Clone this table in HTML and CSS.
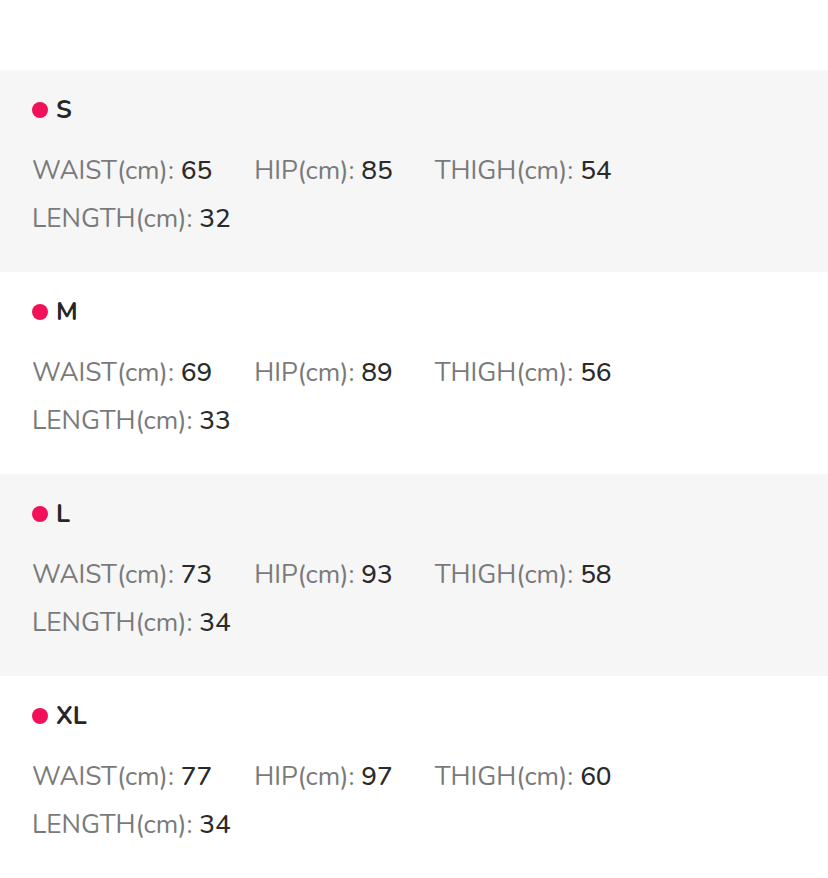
FILE: index.html
```html
<!DOCTYPE html>
<html lang="en">
<head>
<meta charset="utf-8">
<title>Size chart</title>
<link rel="stylesheet" href="styles.css">
</head>
<body>
<div class="page">
  <section class="size grey">
    <div class="size-title"><span class="dot"></span>S</div>
    <div class="specs">
      <div class="spec"><span class="label">WAIST(cm):</span> <span class="value">65</span></div>
      <div class="spec"><span class="label">HIP(cm):</span> <span class="value">85</span></div>
      <div class="spec"><span class="label">THIGH(cm):</span> <span class="value">54</span></div>
      <div class="spec"><span class="label">LENGTH(cm):</span> <span class="value">32</span></div>
    </div>
  </section>
  <section class="size">
    <div class="size-title"><span class="dot"></span>M</div>
    <div class="specs">
      <div class="spec"><span class="label">WAIST(cm):</span> <span class="value">69</span></div>
      <div class="spec"><span class="label">HIP(cm):</span> <span class="value">89</span></div>
      <div class="spec"><span class="label">THIGH(cm):</span> <span class="value">56</span></div>
      <div class="spec"><span class="label">LENGTH(cm):</span> <span class="value">33</span></div>
    </div>
  </section>
  <section class="size grey">
    <div class="size-title"><span class="dot"></span>L</div>
    <div class="specs">
      <div class="spec"><span class="label">WAIST(cm):</span> <span class="value">73</span></div>
      <div class="spec"><span class="label">HIP(cm):</span> <span class="value">93</span></div>
      <div class="spec"><span class="label">THIGH(cm):</span> <span class="value">58</span></div>
      <div class="spec"><span class="label">LENGTH(cm):</span> <span class="value">34</span></div>
    </div>
  </section>
  <section class="size">
    <div class="size-title"><span class="dot"></span>XL</div>
    <div class="specs">
      <div class="spec"><span class="label">WAIST(cm):</span> <span class="value">77</span></div>
      <div class="spec"><span class="label">HIP(cm):</span> <span class="value">97</span></div>
      <div class="spec"><span class="label">THIGH(cm):</span> <span class="value">60</span></div>
      <div class="spec"><span class="label">LENGTH(cm):</span> <span class="value">34</span></div>
    </div>
  </section>
</div>
</body>
</html>
```
FILE: styles.css
```css
html, body {
  margin: 0;
  padding: 0;
  background: #ffffff;
}
body {
  font-family: "Nunito", "Lato", "Noto Sans", sans-serif;
  color: #333333;
}
.page {
  padding-top: 70px;
}
.size {
  height: 202px;
  box-sizing: border-box;
  padding: 24px 32px 0 32px;
}
.size.grey {
  background: #f6f6f6;
}
.size-title {
  display: flex;
  align-items: center;
  gap: 8px;
  height: 32px;
  font-size: 25px;
  font-weight: 700;
  color: #262626;
}
.dot {
  width: 16px;
  height: 16px;
  border-radius: 50%;
  background: #f0115a;
}
.specs {
  margin-top: 20px;
  display: flex;
  flex-wrap: wrap;
  column-gap: 42px;
}
.spec {
  line-height: 48px;
  font-size: 26.25px;
  white-space: nowrap;
}
.label {
  color: #7a7a7a;
  font-weight: 400;
}
.value {
  color: #2a2a2a;
  font-weight: 500;
}
```
